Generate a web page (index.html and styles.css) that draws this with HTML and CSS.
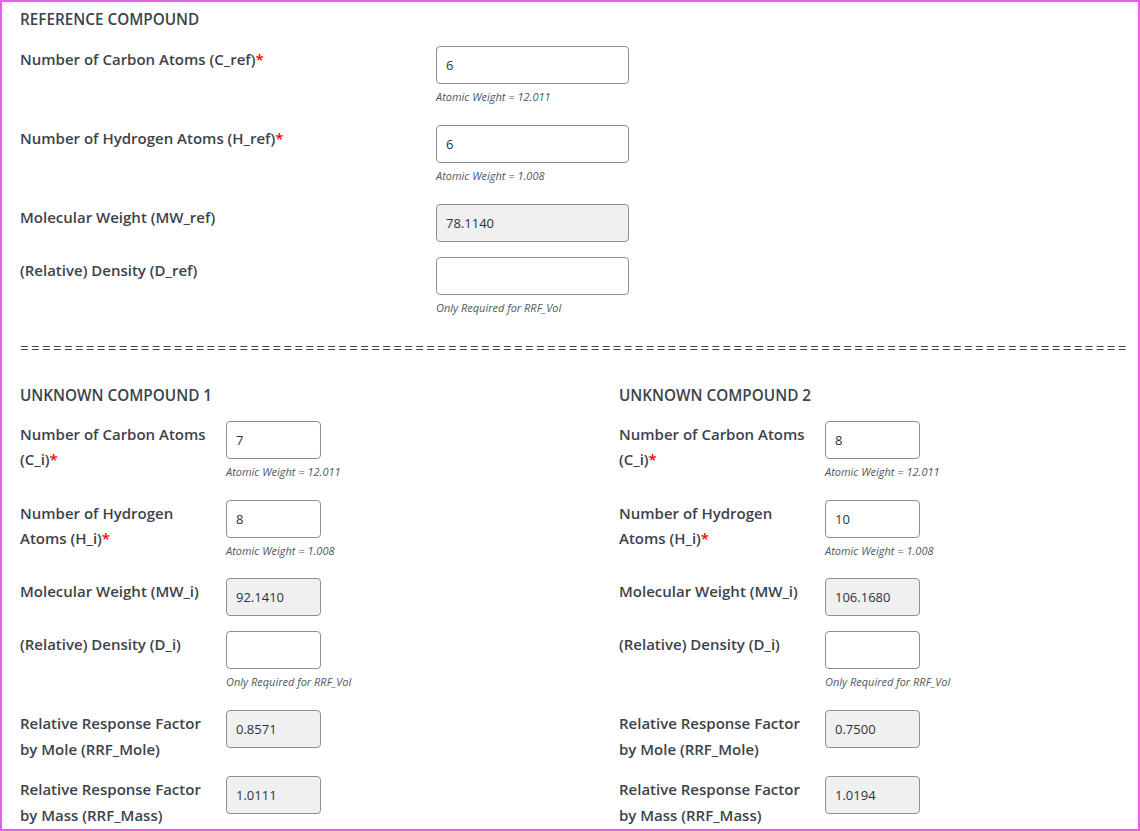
FILE: index.html
```html
<!DOCTYPE html>
<html>
<head>
<meta charset="utf-8">
<link rel="stylesheet" href="styles.css">
</head>
<body>
<div class="frame">
  <section class="ref">
    <h3 class="heading">REFERENCE COMPOUND</h3>
    <div class="row">
      <label class="label">Number of Carbon Atoms (C_ref)<span class="req">*</span></label>
      <div class="field">
        <input class="input wide" type="text" value="6">
        <p class="desc">Atomic Weight = 12.011</p>
      </div>
    </div>
    <div class="row">
      <label class="label">Number of Hydrogen Atoms (H_ref)<span class="req">*</span></label>
      <div class="field">
        <input class="input wide" type="text" value="6">
        <p class="desc">Atomic Weight = 1.008</p>
      </div>
    </div>
    <div class="row">
      <label class="label">Molecular Weight (MW_ref)</label>
      <div class="field">
        <input class="input wide ro" type="text" value="78.1140" readonly>
      </div>
    </div>
    <div class="row">
      <label class="label">(Relative) Density (D_ref)</label>
      <div class="field">
        <input class="input wide" type="text" value="">
        <p class="desc">Only Required for RRF_Vol</p>
      </div>
    </div>
  </section>

  <div class="sep">=====================================================================================================</div>

  <div class="unknowns">
    <section class="unk">
      <h3 class="heading">UNKNOWN COMPOUND 1</h3>
      <div class="row">
        <label class="label">Number of Carbon Atoms (C_i)<span class="req">*</span></label>
        <div class="field">
          <input class="input" type="text" value="7">
          <p class="desc">Atomic Weight = 12.011</p>
        </div>
      </div>
      <div class="row">
        <label class="label">Number of Hydrogen Atoms (H_i)<span class="req">*</span></label>
        <div class="field">
          <input class="input" type="text" value="8">
          <p class="desc">Atomic Weight = 1.008</p>
        </div>
      </div>
      <div class="row">
        <label class="label">Molecular Weight (MW_i)</label>
        <div class="field">
          <input class="input ro" type="text" value="92.1410" readonly>
        </div>
      </div>
      <div class="row">
        <label class="label">(Relative) Density (D_i)</label>
        <div class="field">
          <input class="input" type="text" value="">
          <p class="desc">Only Required for RRF_Vol</p>
        </div>
      </div>
      <div class="row">
        <label class="label">Relative Response Factor by Mole (RRF_Mole)</label>
        <div class="field">
          <input class="input ro" type="text" value="0.8571" readonly>
        </div>
      </div>
      <div class="row">
        <label class="label">Relative Response Factor by Mass (RRF_Mass)</label>
        <div class="field">
          <input class="input ro" type="text" value="1.0111" readonly>
        </div>
      </div>
    </section>

    <section class="unk">
      <h3 class="heading">UNKNOWN COMPOUND 2</h3>
      <div class="row">
        <label class="label">Number of Carbon Atoms (C_i)<span class="req">*</span></label>
        <div class="field">
          <input class="input" type="text" value="8">
          <p class="desc">Atomic Weight = 12.011</p>
        </div>
      </div>
      <div class="row">
        <label class="label">Number of Hydrogen Atoms (H_i)<span class="req">*</span></label>
        <div class="field">
          <input class="input" type="text" value="10">
          <p class="desc">Atomic Weight = 1.008</p>
        </div>
      </div>
      <div class="row">
        <label class="label">Molecular Weight (MW_i)</label>
        <div class="field">
          <input class="input ro" type="text" value="106.1680" readonly>
        </div>
      </div>
      <div class="row">
        <label class="label">(Relative) Density (D_i)</label>
        <div class="field">
          <input class="input" type="text" value="">
          <p class="desc">Only Required for RRF_Vol</p>
        </div>
      </div>
      <div class="row">
        <label class="label">Relative Response Factor by Mole (RRF_Mole)</label>
        <div class="field">
          <input class="input ro" type="text" value="0.7500" readonly>
        </div>
      </div>
      <div class="row">
        <label class="label">Relative Response Factor by Mass (RRF_Mass)</label>
        <div class="field">
          <input class="input ro" type="text" value="1.0194" readonly>
        </div>
      </div>
    </section>
  </div>
</div>
</body>
</html>
```

FILE: styles.css
```css
* { box-sizing: border-box; }
html, body { margin: 0; padding: 0; background: #fff; }
body {
  font-family: "Open Sans", "Noto Sans", sans-serif;
  color: #3c434a;
}
.frame {
  height: 831px;
  border: 2px solid #ee5cee;
  padding: 5px 0 0 18px;
  overflow: hidden;
}
.heading {
  margin: 0 0 14px;
  font-size: 15.3px;
  font-weight: 600;
  line-height: 25px;
}
.unk .heading { margin-bottom: 13px; }
.row {
  display: grid;
  grid-template-columns: 416px auto;
  align-items: start;
  margin-bottom: 15px;
}
.unk .row { grid-template-columns: 206px auto; }
.label {
  font-size: 15px;
  font-weight: 600;
  line-height: 25.5px;
  padding-top: 1px;
  margin-bottom: -1px;
  padding-right: 12px;
}
.req { color: #f00; }
.field { display: flex; flex-direction: column; }
.input {
  width: 95px;
  height: 38px;
  border: 1px solid #8c8f94;
  border-radius: 4px;
  padding: 0 9px;
  font-family: "Open Sans", "Noto Sans", sans-serif;
  font-size: 13px;
  color: #2c3338;
  background: #fff;
  outline: none;
}
.input.wide { width: 193px; }
.input.ro { background: #f0f0f1; }
.desc {
  margin: 5px 0 4.75px;
  font-size: 11px;
  font-style: italic;
  line-height: 16px;
  color: #50575e;
}
.sep {
  margin: 1px 0 22.5px;
  font-size: 15px;
  line-height: 25px;
  white-space: nowrap;
  overflow: hidden;
  letter-spacing: 2.4px;
}
.unknowns {
  display: grid;
  grid-template-columns: 599px auto;
}
```
